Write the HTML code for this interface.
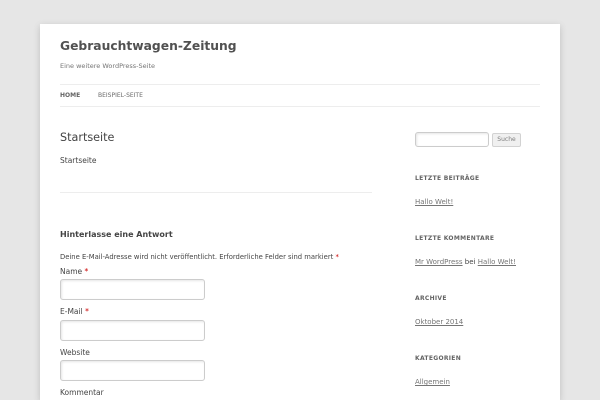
<!DOCTYPE html>
<html style="overflow:hidden;width:600px;height:400px"><head><meta charset="utf-8"><style>
*{margin:0;padding:0;box-sizing:border-box}
body{width:600px;height:400px;overflow:hidden;background:#e6e6e6;font-family:"DejaVu Sans","Liberation Sans",sans-serif;color:#444;position:relative}
.page{position:absolute;left:40px;top:24px;width:520px;height:376px;background:#fff;box-shadow:0 2px 6px rgba(100,100,100,.3)}
.a{position:absolute;white-space:nowrap}
.hr{position:absolute;height:1px;background:#ededed}
.in{position:absolute;border:1px solid #ccc;border-radius:3px;background:#fff;box-shadow:inset 1px 1px 2px rgba(0,0,0,.1)}
.w{font-size:6px;font-weight:bold;color:#636363;letter-spacing:.3px}
.l{font-size:7px;color:#757575;text-decoration:underline}
</style></head><body>
<div class="page"></div>
<div class="a" style="left:60px;top:39px;font-size:12.3px;font-weight:bold;color:#515151">Gebrauchtwagen-Zeitung</div>
<div class="a" style="left:60px;top:62px;font-size:6.5px;color:#757575">Eine weitere WordPress-Seite</div>
<div class="hr" style="left:60px;top:84px;width:480px"></div>
<div class="a" style="left:60px;top:92px;font-size:6px;font-weight:bold;color:#636363">HOME</div>
<div class="a" style="left:98px;top:92px;font-size:6px;color:#6a6a6a">BEISPIEL-SEITE</div>
<div class="hr" style="left:60px;top:106px;width:480px"></div>
<div class="a" style="left:60px;top:131px;font-size:11.2px;color:#444">Startseite</div>
<div class="a" style="left:60px;top:156px;font-size:7.5px;color:#444">Startseite</div>
<div class="hr" style="left:60px;top:192px;width:312px"></div>
<div class="a" style="left:60px;top:230px;font-size:8px;font-weight:bold;color:#444">Hinterlasse eine Antwort</div>
<div class="a" style="left:60px;top:253px;font-size:6.8px;color:#444">Deine E-Mail-Adresse wird nicht veröffentlicht. Erforderliche Felder sind markiert <span style="color:#c00">*</span></div>
<div class="a" style="left:60px;top:267px;font-size:7.5px">Name <span style="color:#c00">*</span></div>
<div class="in" style="left:60px;top:279px;width:145px;height:21px"></div>
<div class="a" style="left:60px;top:307px;font-size:7.5px">E-Mail <span style="color:#c00">*</span></div>
<div class="in" style="left:60px;top:320px;width:145px;height:21px"></div>
<div class="a" style="left:60px;top:348px;font-size:7.5px">Website</div>
<div class="in" style="left:60px;top:360px;width:145px;height:21px"></div>
<div class="a" style="left:60px;top:388px;font-size:7.5px">Kommentar</div>
<div class="in" style="left:415px;top:132px;width:74px;height:15px"></div>
<div class="a" style="left:492px;top:133px;width:29px;height:14px;border:1px solid #d2d2d2;border-radius:2px;background:#f0f0f0;font-size:6px;color:#7c7c7c;text-align:center;line-height:12px">Suche</div>
<div class="a w" style="left:415px;top:175px">LETZTE BEITRÄGE</div>
<div class="a l" style="left:415px;top:198px">Hallo Welt!</div>
<div class="a w" style="left:415px;top:235px">LETZTE KOMMENTARE</div>
<div class="a" style="left:415px;top:258px;font-size:7px;color:#444"><span class="l">Mr WordPress</span> bei <span class="l">Hallo Welt!</span></div>
<div class="a w" style="left:415px;top:295px">ARCHIVE</div>
<div class="a l" style="left:415px;top:318px">Oktober 2014</div>
<div class="a w" style="left:415px;top:355px">KATEGORIEN</div>
<div class="a l" style="left:415px;top:378px">Allgemein</div>
</body></html>
